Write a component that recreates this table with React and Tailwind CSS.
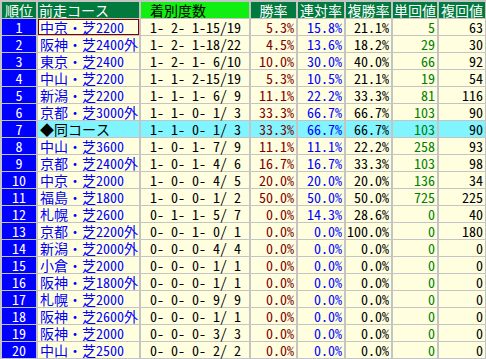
import React from 'react';

// 前走コース別成績
const rows = [
  ['1', '中京・芝2200', '1- 2- 1-15/19', '5.3%', '15.8%', '21.1%', '5', '63'],
  ['2', '阪神・芝2400外', '1- 2- 1-18/22', '4.5%', '13.6%', '18.2%', '29', '30'],
  ['3', '東京・芝2400', '1- 2- 1- 6/10', '10.0%', '30.0%', '40.0%', '66', '92'],
  ['4', '中山・芝2200', '1- 1- 2-15/19', '5.3%', '10.5%', '21.1%', '19', '54'],
  ['5', '新潟・芝2200', '1- 1- 1- 6/ 9', '11.1%', '22.2%', '33.3%', '81', '116'],
  ['6', '京都・芝3000外', '1- 1- 0- 1/ 3', '33.3%', '66.7%', '66.7%', '103', '90'],
  ['7', '◆同コース', '1- 1- 0- 1/ 3', '33.3%', '66.7%', '66.7%', '103', '90'],
  ['8', '中山・芝3600', '1- 0- 1- 7/ 9', '11.1%', '11.1%', '22.2%', '258', '93'],
  ['9', '京都・芝2400外', '1- 0- 1- 4/ 6', '16.7%', '16.7%', '33.3%', '103', '98'],
  ['10', '中京・芝2000', '1- 0- 0- 4/ 5', '20.0%', '20.0%', '20.0%', '136', '34'],
  ['11', '福島・芝1800', '1- 0- 0- 1/ 2', '50.0%', '50.0%', '50.0%', '725', '225'],
  ['12', '札幌・芝2600', '0- 1- 1- 5/ 7', '0.0%', '14.3%', '28.6%', '0', '40'],
  ['13', '京都・芝2200外', '0- 0- 1- 0/ 1', '0.0%', '0.0%', '100.0%', '0', '180'],
  ['14', '新潟・芝2000外', '0- 0- 0- 4/ 4', '0.0%', '0.0%', '0.0%', '0', '0'],
  ['15', '小倉・芝2000', '0- 0- 0- 1/ 1', '0.0%', '0.0%', '0.0%', '0', '0'],
  ['16', '阪神・芝1800外', '0- 0- 0- 1/ 1', '0.0%', '0.0%', '0.0%', '0', '0'],
  ['17', '札幌・芝2000', '0- 0- 0- 9/ 9', '0.0%', '0.0%', '0.0%', '0', '0'],
  ['18', '阪神・芝2600外', '0- 0- 0- 1/ 1', '0.0%', '0.0%', '0.0%', '0', '0'],
  ['19', '阪神・芝2000', '0- 0- 0- 3/ 3', '0.0%', '0.0%', '0.0%', '0', '0'],
  ['20', '中山・芝2500', '0- 0- 0- 2/ 2', '0.0%', '0.0%', '0.0%', '0', '0'],
];

const headers = ['勝率', '連対率', '複勝率', '単回値', '複回値'];
const numColors = ['text-[#800000]', 'text-[#0000ff]', 'text-black', 'text-[#008000]', 'text-black'];

const App = () => {
  return (
    <div
      className="w-[486px] h-[359px] overflow-hidden bg-[#c4c4c4] pt-[2px] pl-[2px] text-[14px] leading-[16px]"
      style={{ fontFamily: '"Noto Sans Mono CJK JP", "Noto Sans CJK JP", monospace' }}
    >
      <div className="grid grid-cols-[34px_101px_108px_45px_46px_45px_44px_46px] auto-rows-[16px] gap-x-[2px] gap-y-px">
        <div className="bg-[#007a3d] text-white text-center">順位</div>
        <div className="bg-[#007a3d] text-white pl-[1px]">前走コース</div>
        <div className="bg-[#11ee11] text-black pl-[9px]">着別度数</div>
        {headers.map((h) => (
          <div key={h} className="bg-[#007a3d] text-white text-center">{h}</div>
        ))}

        {rows.map((r, i) => {
          const same = r[0] === '7';
          const bg = same ? 'bg-[#80f4ff]' : 'bg-[#ffffe0]';
          return (
            <React.Fragment key={r[0]}>
              <div className="bg-[#0000ff] text-white text-center">{r[0]}</div>
              <div
                className={`${bg} pl-[2px] whitespace-nowrap ${same ? 'text-black' : 'text-[#0000ff]'} ${
                  i === 0 ? 'outline outline-1 outline-[#800000] -outline-offset-1' : ''
                }`}
              >
                {r[1]}
              </div>
              <div className={`${bg} pl-[9px] whitespace-pre text-black`}>{r[2]}</div>
              {r.slice(3).map((v, j) => (
                <div key={j} className={`${bg} text-right pr-[2px] whitespace-nowrap ${numColors[j]}`}>
                  {v}
                </div>
              ))}
            </React.Fragment>
          );
        })}
      </div>
    </div>
  );
};

export default App;
